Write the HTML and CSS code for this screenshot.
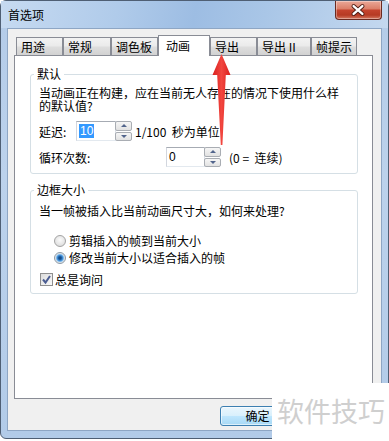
FILE: index.html
```html
<!DOCTYPE html>
<html lang="zh-CN">
<head>
  <meta charset="UTF-8">
  <title>首选项</title>
  <link rel="stylesheet" href="styles.css">
</head>
<body>
  <div class="window">
    <div class="titlebar">
      <span class="title">首选项</span>
      <span class="close">
        <svg width="47" height="19" viewBox="0 0 47 19">
          <path d="M19 5 L28 13 M28 5 L19 13" stroke="#4a1a12" stroke-width="4.2" stroke-linecap="round"/>
          <path d="M19 5 L28 13 M28 5 L19 13" stroke="#fff" stroke-width="2.4" stroke-linecap="round"/>
        </svg>
      </span>
    </div>

    <div class="client">
      <div class="tabs">
        <div class="tab">用途</div>
        <div class="tab tab-48">常规</div>
        <div class="tab">调色板</div>
        <div class="tab active">动画</div>
        <div class="tab">导出</div>
        <div class="tab tab-54">导出 II</div>
        <div class="tab tab-46">帧提示</div>
      </div>

      <div class="panel">
        <fieldset class="group">
          <legend>默认</legend>
          <p class="desc">当动画正在构建，应在当前无人存在的情况下使用什么样<br>的默认值?</p>
          <div class="field">
            <span class="label label-delay">延迟:</span>
            <div class="spin">
              <span class="spin-input"><span class="sel">10</span></span>
              <span class="spin-btns"><span class="up"></span><span class="down"></span></span>
            </div>
            <span class="unit">1/100&nbsp; 秒为单位</span>
          </div>
          <div class="field">
            <span class="label label-loop">循环次数:</span>
            <div class="spin">
              <span class="spin-input spin-input-short">0</span>
              <span class="spin-btns"><span class="up"></span><span class="down"></span></span>
            </div>
            <span class="unit unit-far">(0 =&nbsp; 连续)</span>
          </div>
        </fieldset>

        <fieldset class="group group-size">
          <legend>边框大小</legend>
          <p class="desc">当一帧被插入比当前动画尺寸大，如何来处理?</p>
          <div class="options">
            <div class="opt"><span class="radio"></span>剪辑插入的帧到当前大小</div>
            <div class="opt"><span class="radio on"></span>修改当前大小以适合插入的帧</div>
          </div>
          <div class="check-row">
            <span class="check">
              <svg width="11" height="11" viewBox="0 0 11 11"><path d="M2 5.5 L4.5 8.5 L9 2" fill="none" stroke="#4b5d92" stroke-width="2"/></svg>
            </span>总是询问
          </div>
        </fieldset>
      </div>

      <div class="actions">
        <button class="btn">确定</button>
      </div>
    </div>

    <svg class="arrow" width="24" height="100" viewBox="0 0 24 100">
      <defs>
        <linearGradient id="ar" x1="0" y1="0" x2="1" y2="0">
          <stop offset="0" stop-color="#d9201e"/>
          <stop offset="0.5" stop-color="#f2463f"/>
          <stop offset="1" stop-color="#d9201e"/>
        </linearGradient>
      </defs>
      <path d="M11.5 4 L20.5 25 L15.8 25 L12.4 95 L10.8 95 L7.2 25 L2.5 25 Z" fill="url(#ar)"/>
    </svg>

    <div class="watermark">软件技巧</div>
  </div>
</body>
</html>
```

FILE: styles.css
```css
body { margin:0; background:#fff; font-family:"Noto Sans CJK SC", sans-serif; font-size:12px; color:#000; }

.window {
  position:relative; box-sizing:border-box;
  width:389px; height:439px;
  display:flex; flex-direction:column;
  padding:0 6px 7px 6px;
  border:1px solid #4f5f74; border-radius:6px 6px 0 6px;
  background:linear-gradient(to bottom, #b3cbe8, #bcd2ec 40%, #b2cbe8);
}

.titlebar {
  height:27px; display:flex; align-items:flex-start;
  margin:0 -6px; padding:0 6px;
  background:linear-gradient(100deg, #c6daf1 0%, #b0cbea 30%, #9dbde3 50%, #a9c6e7 68%, #c4d8ef 100%);
}
.title { margin-left:1px; line-height:27px; }
.close {
  margin-left:auto; width:47px; height:19px; box-sizing:border-box;
  border:1px solid #6b2a20; border-top:none; border-radius:0 0 4px 4px;
  background:linear-gradient(#eaa898 0%, #dc806a 42%, #c4432d 52%, #b63a23 78%, #d47860 100%);
  box-shadow:inset 0 0 0 1px rgba(255,255,255,0.35);
  display:flex; justify-content:center;
}
.close svg { margin-left:-1px; }

.client {
  flex:1; display:flex; flex-direction:column;
  background:#f0f0f0; border:1px solid #8ea6c4;
  padding:6px 8px 0 6px;
}

.tabs { display:flex; align-items:flex-end; height:20px; padding-left:2px; }
.tab {
  box-sizing:border-box; width:47px; height:18px;
  border:1px solid #898c95; border-bottom:none;
  padding-left:4px; line-height:17px; white-space:nowrap;
  background:linear-gradient(#f3f3f3, #ebebeb 45%, #dddddd 55%, #d2d2d2);
}
.tab-48 { width:48px; }
.tab-54 { width:54px; }
.tab-46 { width:46px; }
.tab.active {
  position:relative; z-index:1;
  width:52px; height:21px; margin-bottom:-1px;
  padding-left:7px; line-height:19px; background:#fff;
}

.panel {
  box-sizing:border-box; height:344px;
  border:1px solid #898c95; background:#fff;
  padding:11px 14px 0 15px;
}

.group {
  margin:0; min-width:0;
  border:1px solid #d5dfe5; border-radius:3px;
  padding:5px 8px 6px 8px;
}
.group legend { padding:0 3px; margin-left:-5px; line-height:14px; }
.group-size { margin-top:9px; padding:7px 8px 5px 8px; }

.desc { margin:0; line-height:13px; }

.field { display:flex; align-items:center; height:20px; margin-top:9px; }
.field + .field { margin-top:6px; }
.label { flex:none; }
.label-delay { width:37px; }
.label-loop { width:127px; }

.spin { display:flex; height:20px; }
.spin-input {
  box-sizing:border-box; width:40px; height:20px;
  border:1px solid; border-color:#a6abb3 #dbdfe6 #e3e9ef #d2d6de;
  padding-left:2px; line-height:18px;
  font-family:"Liberation Sans", sans-serif;
}
.spin-input-short { width:39px; }
.sel { background:#3399ff; color:#fff; padding:0 1px; }
.spin-btns {
  box-sizing:border-box; width:17px; height:20px;
  display:flex; flex-direction:column; gap:1px;
  margin-left:-1px;
}
.spin-btns span {
  flex:1; box-sizing:border-box;
  border:1px solid #a9adb3; border-radius:2px;
  background:linear-gradient(#f6f6f6, #e2e2e2);
  display:flex; align-items:center; justify-content:center;
}
.spin-btns .up::after {
  content:""; border-left:3px solid transparent; border-right:3px solid transparent;
  border-bottom:3px solid #52658c;
}
.spin-btns .down::after {
  content:""; border-left:3px solid transparent; border-right:3px solid transparent;
  border-top:3px solid #52658c;
}
.unit { margin-left:3px; white-space:nowrap; }
.unit-far { margin-left:8px; }

.options { margin-top:15px; padding-left:15px; }
.opt { display:flex; align-items:center; height:17px; }
.radio {
  box-sizing:border-box; width:12px; height:12px; margin-right:3px;
  border-radius:50%; border:1px solid #a3a3a3;
  background:radial-gradient(circle at 50% 40%, #fbfbfb, #d6d6d6);
}
.radio.on {
  border-color:#8c9aa8;
  background:radial-gradient(circle, #123f70 0, #1d5fa3 1.6px, #4f9ae0 3px, #a9d3f3 4px, #e4e4e4 4.6px, #f4f4f4 6px);
}

.check-row { display:flex; align-items:center; height:17px; margin-top:5px; margin-left:1px; }
.check {
  box-sizing:border-box; width:13px; height:13px; margin-right:2px;
  border:1px solid #8f8f8f;
  background:linear-gradient(135deg, #dcdcdc, #fafafa);
  display:flex; align-items:center; justify-content:center;
}

.actions { display:flex; justify-content:flex-end; margin-top:7px; padding-right:78px; }
.btn {
  box-sizing:border-box; width:75px; height:20px; padding:0;
  font-family:"Noto Sans CJK SC", sans-serif; font-size:12px; line-height:18px; color:#000;
  border:1px solid #3c7fb1; border-radius:3px;
  background:linear-gradient(#eaf6fd 0%, #d9f0fc 48%, #bee6fd 52%, #a7d9f5 100%);
  box-shadow:inset 0 0 0 1px rgba(255,255,255,0.6);
}

.arrow { position:absolute; left:209px; top:49px; }

.watermark {
  position:absolute; left:271px; top:382px; right:-1px; bottom:-1px;
  background:#fff; color:#cfcfcf;
  font-size:27px; line-height:56px; padding-left:5px; white-space:nowrap;
}
```
